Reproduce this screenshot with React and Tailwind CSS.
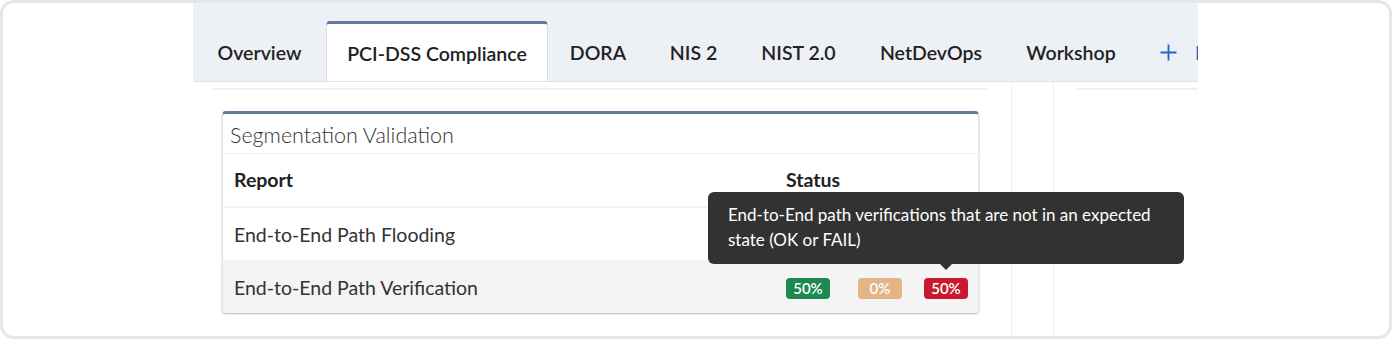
import React from "react";

const F = { fontFamily: "Lato, 'Liberation Sans', sans-serif" };

const tabs = [
  { label: "Overview", w: "w-[133px]" },
  { label: "PCI-DSS Compliance", w: "w-[222px]", active: true },
  { label: "DORA", w: "w-[100px]" },
  { label: "NIS 2", w: "w-[91px]" },
  { label: "NIST 2.0", w: "w-[119px]" },
  { label: "NetDevOps", w: "w-[146px]" },
  { label: "Workshop", w: "w-[134px]" },
];

function Tab({ label, w, active }) {
  if (active) {
    return (
      <div className={`${w} shrink-0 h-[61px] self-end -mb-px bg-white border-t-[3px] border-t-[#64789b] border-x border-x-[#d9dde3] rounded-t-[4px] flex items-center justify-center text-[19.5px] font-semibold text-[#222] whitespace-nowrap`}>
        <span className="mt-[1px]">{label}</span>
      </div>
    );
  }
  return (
    <div className={`${w} shrink-0 h-[60px] self-end flex items-center justify-center text-[19.5px] font-semibold text-[#222] whitespace-nowrap`}>
      <span className="mt-[3px]">{label}</span>
    </div>
  );
}

export default function App() {
  return (
    <div className="w-[1392px] h-[339px] bg-white" style={F}>
      <div className="h-full rounded-[14px] border-[3px] border-[#e6e6e6] overflow-hidden flex bg-white">
        <div className="w-[190px] shrink-0" />
        <div className="w-[1005px] shrink-0 flex flex-col">
          {/* Tab bar */}
          <div className="h-[79px] shrink-0 bg-[#edf0f4] border-b border-[#e0e4e9] flex items-stretch overflow-hidden">
            {tabs.map((t) => (
              <Tab key={t.label} {...t} />
            ))}
            <div className="h-[60px] shrink-0 self-end flex items-center pl-[22px] text-[19.5px] font-semibold text-[#1a66d6] whitespace-nowrap">
              <svg width="17" height="17" viewBox="0 0 17 17" className="mt-[2px]">
                <path d="M8.5 0.5v16M0.5 8.5h16" stroke="#1a66d6" strokeWidth="1.8" fill="none" />
              </svg>
              <span className="ml-[18px] mt-[3px]">New</span>
            </div>
          </div>
          {/* Content */}
          <div className="flex-1 flex">
            <div className="w-[20px] shrink-0" />
            <div className="w-[775px] shrink-0 pt-[6px]">
              <div className="border-t-2 border-[#f0f1f3] pt-[21px] px-[9px]">
                {/* Card */}
                <div className="relative bg-white rounded-[4px] border-t-[3px] border-t-[#687a99] border-x border-x-[#e4e4e4] shadow-[0_1px_2px_rgba(0,0,0,0.28)]">
                  <div className="h-[40px] flex items-center px-[7px] border-b border-[#ececec] text-[21.5px] font-light text-[#333]">
                    <span className="mt-[4px]">Segmentation Validation</span>
                  </div>
                  <div className="h-[54px] flex items-center border-b-2 border-[#f2f2f2] text-[19.5px] font-bold text-[#222]">
                    <div className="w-[563px] shrink-0 pl-[11px]">Report</div>
                    <div>Status</div>
                  </div>
                  <div className="h-[52px] flex items-center text-[19.5px] text-[#333]">
                    <div className="w-[563px] shrink-0 pl-[11px] mt-[2px]">End-to-End Path Flooding</div>
                  </div>
                  <div className="h-[53px] flex items-center pt-[3px] text-[19.5px] text-[#333] bg-[#f4f4f4] rounded-b-[4px]">
                    <div className="w-[563px] shrink-0 pl-[11px]">End-to-End Path Verification</div>
                    <div className="flex items-center text-[15px] font-semibold text-white">
                      <span className="w-[44px] h-[21px] rounded-[4px] bg-[#1c8a4e] flex items-center justify-center">50%</span>
                      <span className="ml-[28px] w-[44px] h-[21px] rounded-[4px] bg-[#e2b487] flex items-center justify-center">0%</span>
                      <span className="relative ml-[22px] w-[44px] h-[21px] rounded-[4px] bg-[#c8192f] flex items-center justify-center">
                        50%
                        {/* Tooltip */}
                        <div className="absolute left-1/2 bottom-[35px] -translate-x-[238px] w-[476px] h-[72px] bg-[#323232] rounded-[6px] px-[20px] pt-[10px] text-[17px] font-normal leading-[25px] text-white whitespace-nowrap z-10">
                          End-to-End path verifications that are not in an expected
                          <br />
                          state (OK or FAIL)
                          <div className="absolute left-[232px] -bottom-[6px] w-0 h-0 border-x-[6px] border-x-transparent border-t-[6px] border-t-[#323232]" />
                        </div>
                      </span>
                    </div>
                  </div>
                </div>
              </div>
            </div>
            <div className="w-[24px] shrink-0 border-r border-[#eef0f2]" />
            <div className="w-[42px] shrink-0 border-r border-[#eef0f2]" />
            <div className="flex-1 pl-[23px] pt-[6px]">
              <div className="border-t-2 border-[#f0f1f3]" />
            </div>
          </div>
        </div>
      </div>
    </div>
  );
}
